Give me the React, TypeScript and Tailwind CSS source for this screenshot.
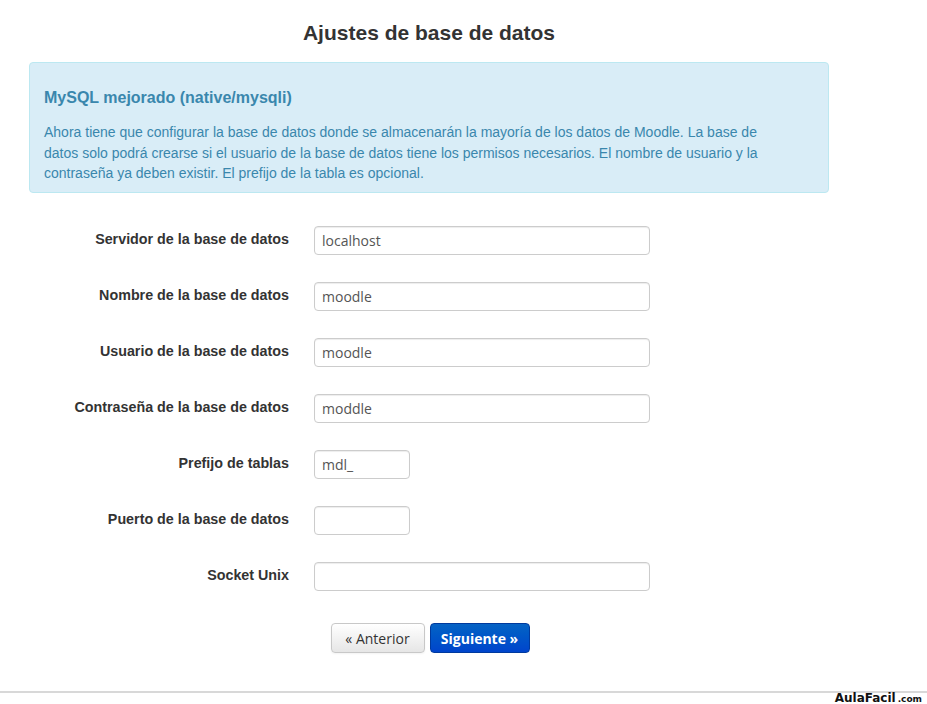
import React from "react";

const rows: { label: string; value: string; small?: boolean }[] = [
  { label: "Servidor de la base de datos", value: "localhost" },
  { label: "Nombre de la base de datos", value: "moodle" },
  { label: "Usuario de la base de datos", value: "moodle" },
  { label: "Contraseña de la base de datos", value: "moddle" },
  { label: "Prefijo de tablas", value: "mdl_", small: true },
  { label: "Puerto de la base de datos", value: "", small: true },
  { label: "Socket Unix", value: "" },
];

export default function App() {
  return (
    <div
      className="relative w-[927px] h-[704px] bg-white overflow-hidden text-[#333]"
      style={{ fontFamily: '"Liberation Sans", Arial, sans-serif' }}
    >
      <div className="ml-[29px] w-[800px] pt-[20px]">
        <h2 className="text-center text-[21px] font-bold leading-[26px] text-[#333]">
          Ajustes de base de datos
        </h2>
        <div className="mt-[16px] h-[131px] rounded-[4px] border border-[#bce8f1] bg-[#d9edf7] px-[14px] pt-[25px] text-[#3a87ad]">
          <h3 className="text-[16px] font-bold leading-[20px]">MySQL mejorado (native/mysqli)</h3>
          <p className="mt-[14px] text-[14px] leading-[20.5px] pr-[20px]">
            Ahora tiene que configurar la base de datos donde se almacenarán la mayoría de los datos de Moodle. La base de datos solo podrá crearse si el usuario de la base de datos tiene los permisos necesarios. El nombre de usuario y la contraseña ya deben existir. El prefijo de la tabla es opcional.
          </p>
        </div>
        <div className="mt-[19px] flex flex-col">
          {rows.map((r) => (
            <div key={r.label} className="flex h-[56px] items-center">
              <label className="w-[260px] text-right text-[14.3px] font-bold text-[#333]">{r.label}</label>
              <div className="ml-[25px]">
                <div
                  className={`${r.small ? "w-[96px]" : "w-[336px]"} h-[29px] rounded-[4px] border border-[#cccccc] bg-white px-[7px] flex items-center text-[14px] text-[#555] shadow-[inset_0_1px_1px_rgba(0,0,0,0.075)]`}
                  style={{ fontFamily: '"Open Sans", "DejaVu Sans", sans-serif' }}
                >
                  {r.value}
                </div>
              </div>
            </div>
          ))}
        </div>
        <div className="mt-[19px] flex justify-center gap-[5px] pl-[2px]">
          <button
            className="h-[30px] w-[94px] rounded-[4px] border border-[#c8c8c8] bg-gradient-to-b from-white to-[#e6e6e6] text-[14px] text-[#333] shadow-[0_1px_2px_rgba(0,0,0,0.05)]"
            style={{ fontFamily: '"Open Sans", "DejaVu Sans", sans-serif' }}
          >
            « Anterior
          </button>
          <button
            className="h-[30px] w-[100px] rounded-[4px] border border-[#003a9e] bg-gradient-to-b from-[#0763c4] to-[#0044cc] text-[14px] font-bold text-white"
            style={{ fontFamily: '"Open Sans", "DejaVu Sans", sans-serif' }}
          >
            Siguiente »
          </button>
        </div>
      </div>
      <div className="absolute left-0 right-0 top-[691px] h-[2px] bg-[#d8d8d8]" />
      <div
        className="absolute right-[5px] top-[692px] flex h-[12px] items-baseline leading-[12px] text-[#111] font-bold"
        style={{ fontFamily: '"DejaVu Sans", Verdana, sans-serif' }}
      >
        <span className="text-[12px] leading-[12px]">AulaFacil</span>
        <span className="ml-[2px] text-[9px] leading-[12px]">.com</span>
      </div>
    </div>
  );
}
